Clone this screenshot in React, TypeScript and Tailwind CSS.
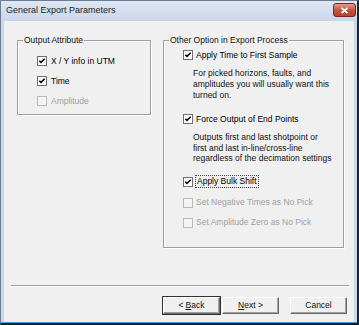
import React from 'react'

function Check({ checked, disabled }: { checked?: boolean; disabled?: boolean }) {
  return (
    <span
      className={`flex items-center justify-center w-[10px] h-[10px] shrink-0 border ${
        disabled ? 'border-[#b9b9b9] bg-[#f4f4f4]' : 'border-[#6f6f6f] bg-white'
      }`}
    >
      {checked && (
        <svg width="8" height="8" viewBox="0 0 8 8">
          <path d="M1.3 3.7 L3 5.4 L6.7 1.7" fill="none" stroke="#000" strokeWidth="1.5" />
        </svg>
      )}
    </span>
  )
}

interface OptionProps {
  label: string
  checked?: boolean
  disabled?: boolean
  focused?: boolean
  gap?: string
  className?: string
}

function Option({ label, checked, disabled, focused, gap = 'gap-[4px]', className = '' }: OptionProps) {
  return (
    <div className={`flex items-center h-[16px] ${gap} ${className}`}>
      <Check checked={checked} disabled={disabled} />
      <span
        className={`whitespace-nowrap leading-[11px] ${disabled ? 'text-[#a0a0a0]' : 'text-black'} ${
          focused ? 'border border-dotted border-[#444] px-[1px] -ml-[1px]' : ''
        }`}
      >
        {label}
      </span>
    </div>
  )
}

function Group({ title, className = '', children }: { title: string; className?: string; children: React.ReactNode }) {
  return (
    <div
      className={`relative border border-[#a0a0a0] shadow-[inset_1px_1px_0_#fff,1px_1px_0_#fff] ${className}`}
    >
      <span className="absolute -top-[7px] left-[5px] px-[1px] bg-[#f0f0f0] leading-[12px] whitespace-nowrap">
        {title}
      </span>
      {children}
    </div>
  )
}

function Button({ children, isDefault }: { children: React.ReactNode; isDefault?: boolean }) {
  return (
    <button
      className={`w-[59px] h-[19px] flex items-center justify-center bg-[#f0f0f0] leading-[11px] ${
        isDefault ? 'border border-[#333]' : 'border border-[#f0f0f0]'
      }`}
    >
      <span className="w-full h-full flex items-center justify-center border border-white border-r-[#6b6b6b] border-b-[#6b6b6b] shadow-[inset_-1px_-1px_0_#a0a0a0]">
        {children}
      </span>
    </button>
  )
}

export default function App() {
  return (
    <div className="w-[359px] h-[325px] flex flex-col bg-[#c9d8ea] border border-[#6d7c90] border-r-2 border-r-[#16283d] border-b-2 border-b-[#0f1d2b] font-['Liberation_Sans',Arial,sans-serif] text-[8.5px] text-[#111] overflow-hidden">
      {/* title bar */}
      <div className="h-[20px] flex items-center justify-between pl-[5px] pr-[1px] bg-gradient-to-b from-[#dfe8f3] to-[#c8d7ea] shrink-0">
        <span className="text-[9px] text-[#1a1a1a]">General Export Parameters</span>
        <div className="w-[23px] h-[14px] -mt-[2px] rounded-[3px] border border-[#6b2a22] bg-gradient-to-b from-[#e39a8c] via-[#c9523f] to-[#b8412e] flex items-center justify-center">
          <svg width="9" height="7" viewBox="0 0 9 7">
            <path d="M1.5 1 L7.5 6 M7.5 1 L1.5 6" stroke="#fff" strokeWidth="1.8" />
          </svg>
        </div>
      </div>

      {/* client */}
      <div className="flex-1 flex flex-col mx-[3px] bg-[#f0f0f0]">
        <div className="flex items-start pt-[19px] pl-[13px] gap-[12px]">
          <Group title="Output Attribute" className="w-[134px] h-[75px] pt-[10px] pl-[19px]">
            <Option label="X / Y info in UTM" checked className="h-[20px]" />
            <Option label="Time" checked className="h-[20px]" />
            <Option label="Amplitude" disabled className="h-[20px]" />
          </Group>

          <Group title="Other Option in Export Process" className="w-[181px] h-[208px] pt-[6px] pl-[19px]">
            <Option label="Apply Time to First Sample" checked gap="gap-[3px]" />
            <p className="mt-[5px] ml-[10px] leading-[11px] whitespace-nowrap">
              For picked horizons, faults, and
              <br />
              amplitudes you will usually want this
              <br />
              turned on.
            </p>
            <Option label="Force Output of End Points" checked gap="gap-[3px]" className="mt-[10px]" />
            <p className="mt-[5px] ml-[10px] leading-[10.6px] whitespace-nowrap">
              Outputs first and last shotpoint or
              <br />
              first and last in-line/cross-line
              <br />
              regardless of the decimation settings
            </p>
            <Option label="Apply Bulk Shift" checked focused gap="gap-[3px]" className="mt-[10px]" />
            <Option label="Set Negative Times as No Pick" disabled gap="gap-[3px]" className="mt-[5px]" />
            <Option label="Set Amplitude Zero as No Pick" disabled gap="gap-[3px]" className="mt-[4px]" />
          </Group>
        </div>

        <div className="mt-[37px] ml-[7px] w-[338px] h-[2px] border-t border-[#a0a0a0] border-b border-b-white" />

        <div className="flex mt-[9px] pl-[158px]">
          <Button isDefault>
            &lt; <span className="underline ml-[2px]">B</span>ack
          </Button>
          <Button>
            <span className="underline">N</span>ext &gt;
          </Button>
          <div className="ml-[9px]">
            <Button>Cancel</Button>
          </div>
        </div>
      </div>
      <div className="h-[1px] bg-[#3fa2d6] shrink-0" />
    </div>
  )
}
